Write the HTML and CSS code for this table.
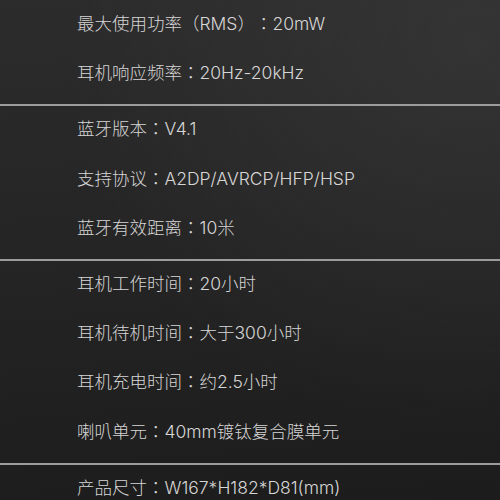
FILE: index.html
```html
<!DOCTYPE html>
<html>
  <head>
    <title>参数</title>
    <meta name="viewport" content="width=device-width, initial-scale=1">
    <link rel="stylesheet" href="styles.css">
  </head>
  <body>
    <div class="specs">
      <div class="spec-group first">
        <p class="spec">最大使用功率（RMS）：20mW</p>
        <p class="spec">耳机响应频率：20Hz-20kHz</p>
      </div>
      <div class="spec-group">
        <p class="spec">蓝牙版本：V4.1</p>
        <p class="spec">支持协议：A2DP/AVRCP/HFP/HSP</p>
        <p class="spec">蓝牙有效距离：10米</p>
      </div>
      <div class="spec-group">
        <p class="spec">耳机工作时间：20小时</p>
        <p class="spec">耳机待机时间：大于300小时</p>
        <p class="spec">耳机充电时间：约2.5小时</p>
        <p class="spec">喇叭单元：40mm镀钛复合膜单元</p>
      </div>
      <div class="spec-group">
        <p class="spec">产品尺寸：W167*H182*D81(mm)</p>
      </div>
    </div>
  </body>
</html>
```
FILE: styles.css
```css
html {
  height: 100%;
}

body {
  margin: 0;
  min-height: 100%;
  overflow: hidden;
  background:
    radial-gradient(ellipse at 95% 10%, rgba(70,70,70,.35), transparent 60%),
    linear-gradient(175deg, #2d2c2c 0%, #262525 45%, #1c1c1c 100%);
  font-family: Inter, "Noto Sans CJK TC", sans-serif;
  font-weight: 300;
  color: #d6d6d6;
}

.specs {
  padding-top: 1px;
}

.spec-group {
  display: flex;
  flex-direction: column;
  gap: 25.3px;
  padding: 11px 0 19px 77px;
  border-top: 2px solid #9c9c9c;
}

.spec-group.first {
  border-top: none;
}

.spec {
  margin: 0;
  font-size: 17.5px;
  line-height: 24px;
  white-space: nowrap;
  text-spacing-trim: space-all;
}
```
